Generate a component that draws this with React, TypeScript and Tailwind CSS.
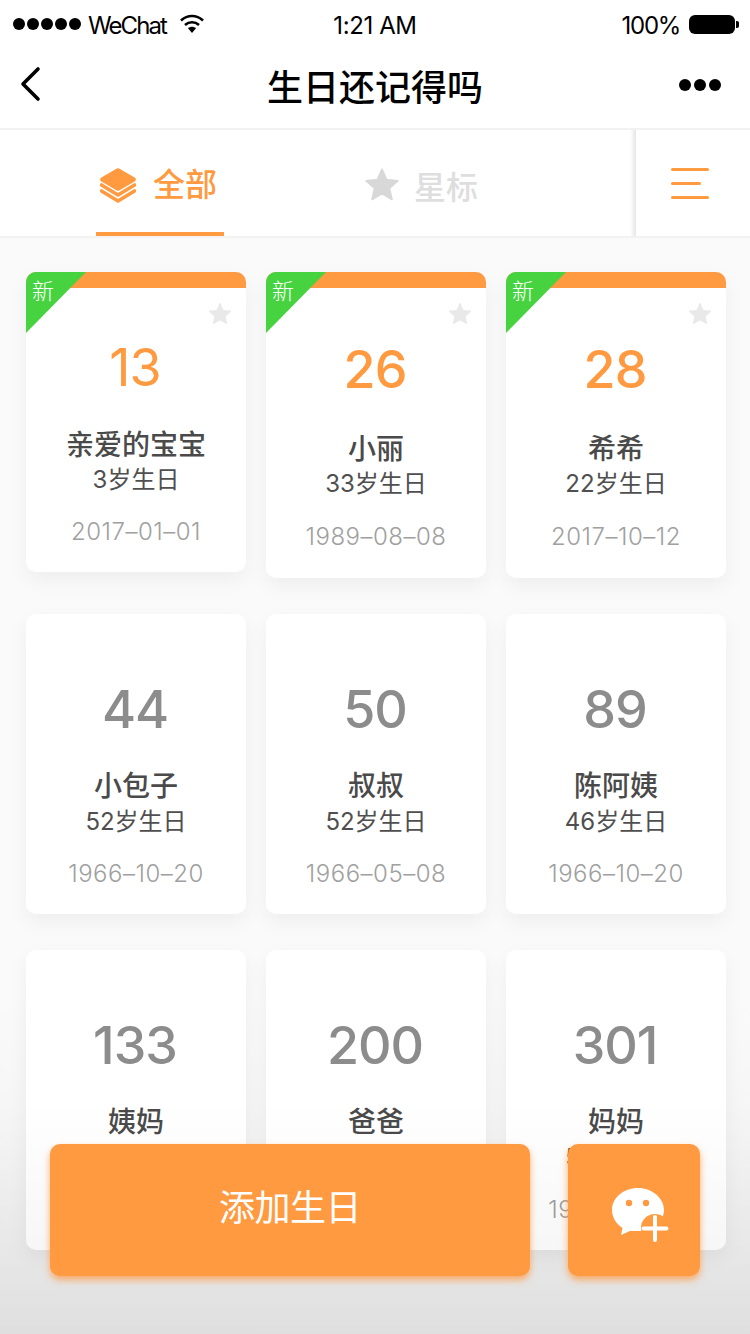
const ORANGE = "#ff9a40";

type Person = {
  n: string;
  name: string;
  age: string;
  date: string;
  isNew?: boolean;
  v: "first" | "tall" | "plain";
};

const people: Person[] = [
  { n: "13", name: "亲爱的宝宝", age: "3岁生日", date: "2017–01–01", isNew: true, v: "first" },
  { n: "26", name: "小丽", age: "33岁生日", date: "1989–08–08", isNew: true, v: "tall" },
  { n: "28", name: "希希", age: "22岁生日", date: "2017–10–12", isNew: true, v: "tall" },
  { n: "44", name: "小包子", age: "52岁生日", date: "1966–10–20", v: "plain" },
  { n: "50", name: "叔叔", age: "52岁生日", date: "1966–05–08", v: "plain" },
  { n: "89", name: "陈阿姨", age: "46岁生日", date: "1966–10–20", v: "plain" },
  { n: "133", name: "姨妈", age: "56岁生日", date: "1966–10–20", v: "plain" },
  { n: "200", name: "爸爸", age: "58岁生日", date: "1960–10–20", v: "plain" },
  { n: "301", name: "妈妈", age: "56岁生日", date: "1966–10–20", v: "plain" },
];

function Star({ className, color }: { className: string; color: string }) {
  return (
    <svg viewBox="0 0 24 24" className={className}>
      <path
        fill={color}
        stroke={color}
        strokeWidth="1.2"
        strokeLinejoin="round"
        d="M12 1.5l3.1 7 7.4.7-5.6 5 1.7 7.4L12 17.7 5.4 21.6l1.7-7.4-5.6-5 7.4-.7z"
      />
    </svg>
  );
}

function Card({ p }: { p: Person }) {
  const tall = p.v === "tall";
  const first = p.v === "first";
  return (
    <div
      className={`relative bg-white rounded-[10px] overflow-hidden shadow-[0_8px_20px_rgba(0,0,0,0.05)] flex flex-col items-center ${
        tall ? "h-[306px]" : "h-[300px]"
      }`}
    >
      {p.isNew && (
        <>
          <div className="absolute left-0 top-0 w-full h-[16px] bg-[#ff9a40]" />
          <div className="absolute left-0 top-0 w-[60px] h-[61px] bg-[#46d33f] [clip-path:polygon(0_0,100%_0,0_100%)]" />
          <span className="absolute left-[6px] top-[5px] text-[22px] leading-[28px] font-light text-white">新</span>
          <Star className="absolute right-[14px] top-[30px] w-[24px] h-[24px]" color="#e9e9e9" />
        </>
      )}
      <div
        className={`text-[52px] leading-[60px] tracking-[-1px] pr-[2px] ${first ? "font-normal" : "font-medium"} ${
          tall ? "mt-[68px]" : "mt-[66px]"
        } ${p.isNew ? "text-[#ff9a40]" : "text-[#8c8c8c]"}`}
      >
        {p.n}
      </div>
      <div
        className={`text-[28px] leading-[36px] font-medium text-[#4a4a4a] ${
          tall ? "mt-[31px]" : first ? "mt-[29px]" : "mt-[28px]"
        }`}
      >
        {p.name}
      </div>
      <div className={`text-[24px] leading-[36px] text-[#4f4f4f] ${first || tall ? "-mt-[1px]" : ""}`}>{p.age}</div>
      <div
        className={`text-[24px] leading-[36px] font-light tracking-[0.5px] text-[#a0a0a0] ${
          tall ? "mt-[17px]" : "mt-[16px]"
        }`}
      >
        {p.date}
      </div>
    </div>
  );
}

export default function App() {
  return (
    <div className="relative w-[750px] h-[1334px] overflow-hidden bg-[linear-gradient(180deg,#fafafa_0,#fafafa_1000px,#f5f5f5_1130px,#ebebeb_1334px)] font-['Inter','Noto_Sans_CJK_SC',sans-serif]">
      {/* status bar */}
      <div className="h-[48px] bg-white grid grid-cols-3 items-center text-black text-[24px]">
        <div className="flex items-center pl-[13px]">
          <div className="flex gap-[2px]">
            <i className="w-[12px] h-[12px] rounded-full bg-black" />
            <i className="w-[12px] h-[12px] rounded-full bg-black" />
            <i className="w-[12px] h-[12px] rounded-full bg-black" />
            <i className="w-[12px] h-[12px] rounded-full bg-black" />
            <i className="w-[12px] h-[12px] rounded-full bg-black" />
          </div>
          <span className="ml-[7px] pt-[3px] tracking-[-1.9px]">WeChat</span>
          <svg viewBox="0 0 24 20" className="ml-[14px] w-[24px] h-[20px]">
            <path d="M1 6.5C7.5.5 16.5.5 23 6.5" fill="none" stroke="#000" strokeWidth="2.6" />
            <path d="M5 11c4-3.6 10-3.6 14 0" fill="none" stroke="#000" strokeWidth="2.6" />
            <path d="M8 14.2c2.4-2 5.600-2 8 0L12 19z" fill="#000" />
          </svg>
        </div>
        <div className="text-center pt-[3px] tracking-[-0.4px]">1:21 AM</div>
        <div className="flex items-center justify-end pr-[11px]">
          <span className="pt-[3px] tracking-[-1.300px]">100%</span>
          <div className="ml-[9px] w-[46px] h-[19px] rounded-[6px] bg-black" />
          <div className="w-[3px] h-[7px] ml-[1px] rounded-r-[2px] bg-black" />
        </div>
      </div>

      {/* nav bar */}
      <div className="h-[82px] bg-white border-b-2 border-[#f2f2f2] flex items-center pl-[20px] pr-[29px]">
        <div className="w-[109px] -mt-[8px]">
          <svg viewBox="0 0 22 36" className="w-[22px] h-[36px]">
            <path d="M18 3L3 18l15 15" fill="none" stroke="#000" strokeWidth="3.6" strokeLinecap="round" strokeLinejoin="round" />
          </svg>
        </div>
        <div className="flex-1 text-center text-[36px] leading-[48px] font-medium text-black">生日还记得吗</div>
        <div className="w-[100px] flex justify-end gap-[3px] -mt-[6px]">
          <i className="w-[12px] h-[12px] rounded-full bg-black" />
          <i className="w-[12px] h-[12px] rounded-full bg-black" />
          <i className="w-[12px] h-[12px] rounded-full bg-black" />
        </div>
      </div>

      {/* tabs */}
      <div className="h-[108px] bg-white border-b-2 border-[#f2f2f2] flex">
        <div className="w-[630px] flex pl-[96px]">
          <div className="w-[128px] h-[106px] border-b-4 border-[#ff9a40] flex items-center pl-[4px] pt-[8px]">
            <svg viewBox="0 0 36 36" className="w-[36px] h-[36px] shrink-0">
              <path fill={ORANGE} stroke={ORANGE} strokeWidth="4.500" strokeLinejoin="round" d="M18 3.500L33.500 12.500 18 21.500 2.500 12.500z" />
              <path fill="none" stroke={ORANGE} strokeWidth="3.600" strokeLinecap="round" strokeLinejoin="round" d="M1.500 18L18 28l16.500-10" />
              <path fill="none" stroke={ORANGE} strokeWidth="3.600" strokeLinecap="round" strokeLinejoin="round" d="M1.500 24L18 34l16.500-10" />
            </svg>
            <span className="ml-[17px] text-[32px] leading-[44px] font-medium text-[#ff9a40] whitespace-nowrap">全部</span>
          </div>
          <div className="ml-[140px] h-[106px] flex items-center pt-[10px]">
            <Star className="w-[36px] h-[36px] shrink-0 -mt-[6px]" color="#d8d8d8" />
            <span className="ml-[14px] text-[32px] leading-[44px] font-medium text-[#dedede] whitespace-nowrap">星标</span>
          </div>
        </div>
        <div className="w-[6px] bg-gradient-to-r from-[#ffffff] to-[#e6e6e6]" />
        <div className="flex-1 flex flex-col pl-[35px] pt-[38px] gap-[11px]">
          <i className="block w-[38px] h-[3px] rounded-full bg-[#ff9a40]" />
          <i className="block w-[30px] h-[3px] rounded-full bg-[#ff9a40]" />
          <i className="block w-[38px] h-[3px] rounded-full bg-[#ff9a40]" />
        </div>
      </div>

      {/* cards */}
      <div className="grid grid-cols-[220px_220px_220px] items-start gap-x-[20px] gap-y-[36px] pl-[26px] pt-[34px]">
        {people.map((p) => (
          <Card key={p.n} p={p} />
        ))}
      </div>

      {/* soft fade over the cards */}
      <div className="absolute left-0 right-0 bottom-0 h-[234px] bg-gradient-to-b from-[#00000000] to-[#0000000d] pointer-events-none" />

      {/* floating buttons */}
      <div className="absolute left-[50px] right-[50px] top-[1144px] flex justify-between">
        <div className="w-[480px] h-[132px] rounded-[10px] bg-[#ff9a40] shadow-[0_4px_7px_rgba(255,150,60,0.75)] flex items-center justify-center text-white text-[36px] tracking-[-0.5px] pb-[4px]">
          添加生日
        </div>
        <div className="w-[132px] h-[132px] rounded-[10px] bg-[#ff9a40] shadow-[0_4px_7px_rgba(255,150,60,0.75)] flex items-center justify-center">
          <svg viewBox="0 0 70 60" className="w-[70px] h-[60px] ml-[10px] mt-[14px]">
            <path fill="#fff" d="M34 1C19.600 1 8 10.800 8 23c0 7.400 4.200 13.800 10.500 18L17 48l9.500-4.200c2.400.5 4.900.2 7.500.2 14.400 0 26-9.300 26-21S48.400 1 34 1z" />
            <circle cx="25" cy="16" r="3.200" fill={ORANGE} />
            <circle cx="42" cy="16" r="3.200" fill={ORANGE} />
            <circle cx="51" cy="41" r="14" fill={ORANGE} />
            <path d="M51 30v23M39.500 41.500h23" fill="none" stroke="#fff" strokeWidth="4" strokeLinecap="round" />
          </svg>
        </div>
      </div>
    </div>
  );
}
